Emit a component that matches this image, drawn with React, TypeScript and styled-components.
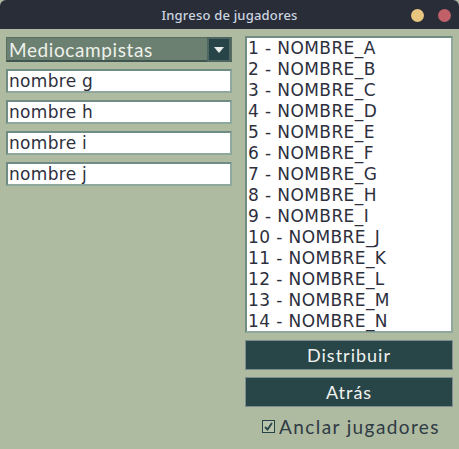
import styled, { createGlobalStyle } from "styled-components";

const GlobalStyle = createGlobalStyle`
  html, body {
    margin: 0;
    padding: 0;
    background: #aebba1;
  }
  * {
    box-sizing: border-box;
  }
`;

const players = [
  "NOMBRE_A",
  "NOMBRE_B",
  "NOMBRE_C",
  "NOMBRE_D",
  "NOMBRE_E",
  "NOMBRE_F",
  "NOMBRE_G",
  "NOMBRE_H",
  "NOMBRE_I",
  "NOMBRE_J",
  "NOMBRE_K",
  "NOMBRE_L",
  "NOMBRE_M",
  "NOMBRE_N",
];

const entries = ["nombre g", "nombre h", "nombre i", "nombre j"];

const App = () => {
  return (
    <Window>
      <GlobalStyle />
      <TitleBar>
        <Title>{"Ingreso de jugadores"}</Title>
        <Dots>
          <Dot $color="#e8c67f" />
          <Dot $color="#c2606a" />
        </Dots>
      </TitleBar>
      <Body>
        <LeftColumn>
          <Combo>
            <ComboText>{"Mediocampistas"}</ComboText>
            <ComboArrow>
              <svg width="10" height="6" viewBox="0 0 10 6">
                <path d="M0 0 L10 0 L5 6 Z" fill="#e8ecea" />
              </svg>
            </ComboArrow>
          </Combo>
          {entries.map((name) => (
            <Entry key={name}>{name}</Entry>
          ))}
        </LeftColumn>
        <RightColumn>
          <ListBox>
            {players.map((p, i) => (
              <ListItem key={p}>{`${i + 1} - ${p}`}</ListItem>
            ))}
          </ListBox>
          <ActionButton>{"Distribuir"}</ActionButton>
          <ActionButton>{"Atrás"}</ActionButton>
          <CheckRow>
            <CheckBox>
              <svg width="9" height="9" viewBox="0 0 9 9">
                <path
                  d="M1 5 L3.5 7.5 L8 1"
                  stroke="#264447"
                  strokeWidth="1.8"
                  fill="none"
                />
              </svg>
            </CheckBox>
            <CheckLabel>{"Anclar jugadores"}</CheckLabel>
          </CheckRow>
        </RightColumn>
      </Body>
    </Window>
  );
};

export default App;

const Window = styled.div`
  width: 459px;
  height: 449px;
  background: #aebba1;
  display: flex;
  flex-direction: column;
`;

const TitleBar = styled.div`
  height: 29px;
  background: #282d38;
  border-radius: 6px 6px 0 0;
  display: flex;
  align-items: center;
  justify-content: center;
  position: relative;
`;

const Title = styled.div`
  font-family: "Noto Sans", "DejaVu Sans", sans-serif;
  font-size: 13px;
  font-weight: 500;
  color: #cdd5e0;
  letter-spacing: 0.2px;
`;

const Dots = styled.div`
  position: absolute;
  right: 8px;
  top: 9px;
  display: flex;
  gap: 14px;
`;

const Dot = styled.div<{ $color: string }>`
  width: 13px;
  height: 13px;
  border-radius: 50%;
  background: ${({ $color }) => $color};
`;

const Body = styled.div`
  display: grid;
  grid-template-columns: 226px 208px;
  column-gap: 13px;
  padding: 7px 6px 0 6px;
`;

const LeftColumn = styled.div`
  display: flex;
  flex-direction: column;
  gap: 7px;
  padding-top: 1px;
`;

const Combo = styled.div`
  height: 25px;
  background: #6b8071;
  border: 1px solid #5a6e62;
  border-bottom: 2px solid #3f5550;
  display: flex;
  align-items: center;
  justify-content: space-between;
  padding-left: 2px;
`;

const ComboText = styled.span`
  font-family: "Lato", "Noto Sans", sans-serif;
  font-size: 19px;
  color: #eef1ea;
  letter-spacing: 0.6px;
`;

const ComboArrow = styled.div`
  width: 24px;
  height: 25px;
  background: #274548;
  border: 2px solid #4d6662;
  margin-top: 1px;
  display: flex;
  align-items: center;
  justify-content: center;
`;

const Entry = styled.div`
  height: 24px;
  background: #ffffff;
  border: 2px solid #6f8d84;
  border-right-color: #8fa89d;
  border-bottom-color: #8fa89d;
  font-family: "DejaVu Sans", sans-serif;
  font-size: 17px;
  color: #2d2f3d;
  line-height: 20px;
  padding-left: 1px;
  letter-spacing: 0.3px;
`;

const RightColumn = styled.div`
  display: flex;
  flex-direction: column;
  gap: 7px;
`;

const ListBox = styled.div`
  height: 297px;
  background: #ffffff;
  border: 2px solid #6f8d84;
  border-right-color: #8fa89d;
  border-bottom-color: #8fa89d;
  padding: 0 0 0 1px;
  display: flex;
  flex-direction: column;
`;

const ListItem = styled.div`
  font-family: "DejaVu Sans", sans-serif;
  font-size: 17px;
  line-height: 21px;
  color: #2d2f3d;
  letter-spacing: 0.4px;
  white-space: nowrap;
`;

const ActionButton = styled.button`
  height: 30px;
  background: #284548;
  border: 1px solid #7c8c90;
  color: #f1f3ef;
  font-family: "Lato", "Noto Sans", sans-serif;
  font-size: 18px;
  letter-spacing: 1px;
  padding: 0;
  cursor: pointer;
`;

const CheckRow = styled.label`
  display: flex;
  align-items: center;
  justify-content: center;
  gap: 4px;
  padding-top: 1px;
  padding-left: 4px;
`;

const CheckBox = styled.span`
  width: 13px;
  height: 13px;
  border: 1.5px solid #264447;
  background: #b8c4ac;
  display: flex;
  align-items: center;
  justify-content: center;
`;

const CheckLabel = styled.span`
  font-family: "Lato", "Noto Sans", sans-serif;
  font-size: 19px;
  color: #2e3a44;
  letter-spacing: 1.4px;
`;
